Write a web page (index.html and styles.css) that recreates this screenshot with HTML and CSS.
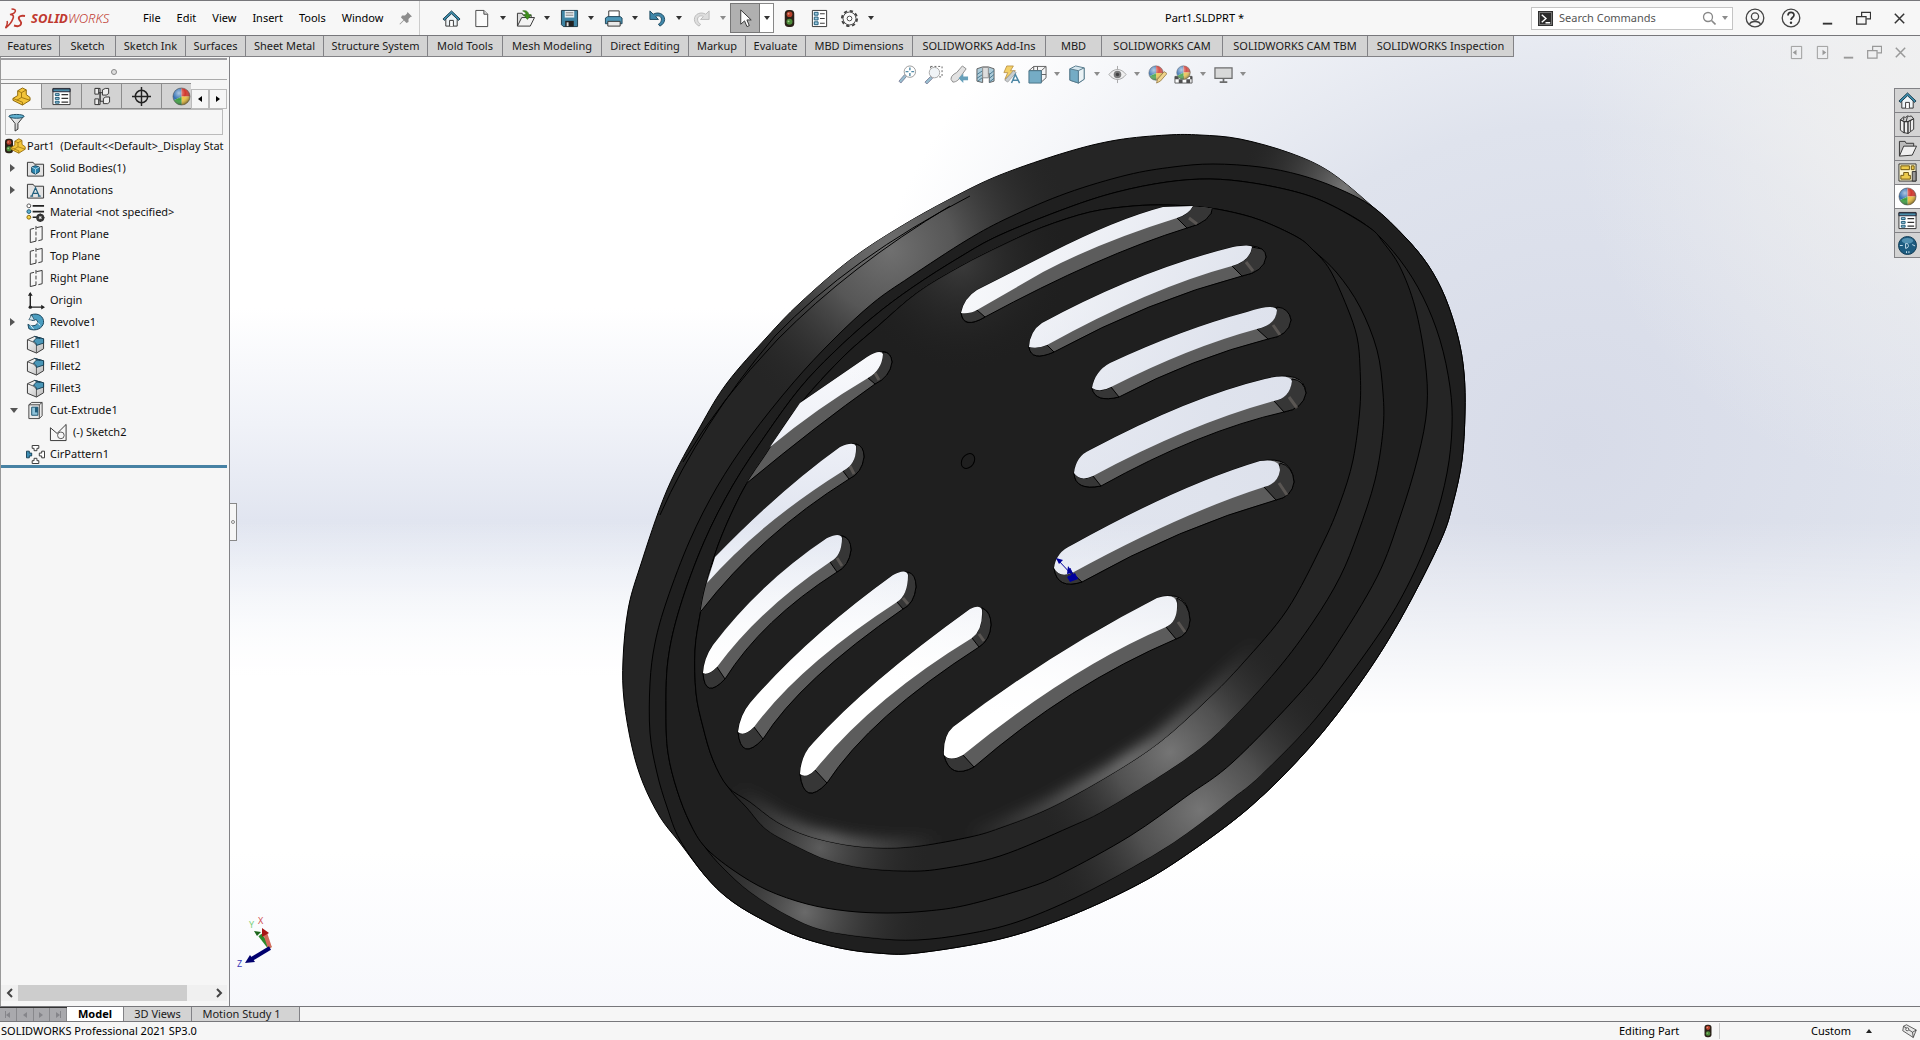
FILE: index.html
```html
<!DOCTYPE html>
<html lang="en">
<head>
<meta charset="utf-8">
<title>Part1.SLDPRT *</title>
<link rel="stylesheet" href="styles.css">
</head>
<body>
<svg class="sprite" aria-hidden="true">
  <defs>
    <linearGradient id="blueFill" x1="0" y1="0" x2="1" y2="1"><stop offset="0" stop-color="#9fd0e2"/><stop offset="1" stop-color="#2f7396"/></linearGradient>
    <linearGradient id="greyFill" x1="0" y1="0" x2="1" y2="1"><stop offset="0" stop-color="#fff"/><stop offset="1" stop-color="#b9b9b9"/></linearGradient>
    <radialGradient id="ballShade" cx=".35" cy=".3" r=".75"><stop offset="0" stop-color="#fff" stop-opacity=".6"/><stop offset=".5" stop-color="#fff" stop-opacity="0"/><stop offset="1" stop-color="#000" stop-opacity=".5"/></radialGradient>
    <symbol id="i-home" viewBox="0 0 20 20"><path d="M4 10v8h12v-8l-6-6z" fill="#eef4f7" stroke="#333"/><path d="M8 18v-6h4v6" fill="#fff" stroke="#333"/><path d="M1 10.500 10 2l9 8.500-1.500 1.500L10 5 2.500 12z" fill="#3d8fae" stroke="#1f3f50"/></symbol>
    <symbol id="i-new" viewBox="0 0 20 20"><path d="M4 1.500h8.500l4 4v13H4z" fill="#fbfbfb" stroke="#444"/><path d="M12.500 1.500v4h4" fill="#ddd" stroke="#444"/></symbol>
    <symbol id="i-open" viewBox="0 0 20 20"><path d="M1.500 18V4.500h5l1 2H16V9" fill="#ddd" stroke="#333"/><path d="M1.500 18 6 9h13.500L15 18z" fill="#f3f3f3" stroke="#333"/><path d="M7 2c4-1 6 1 6.500 4h2.500l-4 5-4-5h2.500C10.500 4 9 2.500 7 2z" fill="#3f8f1d" stroke="#24610d" stroke-width=".6"/></symbol>
    <symbol id="i-save" viewBox="0 0 20 20"><path d="M1.500 1.500h17v17h-15l-2-2z" fill="#3d83a3" stroke="#1f3948"/><path d="M5 2h10v7H5z" fill="#e7eef2"/><path d="M6 4h8M6 6.500h8" stroke="#777"/><path d="M5.500 12.500h9v6h-9z" fill="#222"/><path d="M7 14h2v4H7z" fill="#ddd"/></symbol>
    <symbol id="i-print" viewBox="0 0 20 20"><path d="M5 9V2h11v7" fill="#fff" stroke="#333"/><path d="M1.500 9.500 4 8h13l2 1.500v6h-17.500z" fill="#4e96b6" stroke="#20465a"/><path d="M4 13h13v5H4z" fill="#e9e9e9" stroke="#333"/></symbol>
    <symbol id="i-undo" viewBox="0 0 20 20"><path d="M2 2v9h9L8 8c3-2 7 0 6 4-.4 2-1.500 3-3 4l1.500 2c3-1.500 5-4 5-7C17.500 5 10.500 2.500 5.500 5.500z" fill="#3f87aa" stroke="#1f4a60"/></symbol>
    <symbol id="i-redo" viewBox="0 0 20 20"><path d="M18 2v9H9l3-3c-3-2-7 0-6 4 .4 2 1.500 3 3 4l-1.500 2c-3-1.500-5-4-5-7C2.500 5 9.500 2.500 14.500 5.500z" fill="#ddd" stroke="#bbb"/></symbol>
    <symbol id="i-cursor" viewBox="0 0 20 20"><path d="M5 1v15l4-3.500 2.500 6 2.500-1-2.500-6H16z" fill="#fff" stroke="#333"/></symbol>
    <symbol id="i-light" viewBox="0 0 20 20"><rect x="5" y="1" width="10" height="18" rx="4" fill="#2a2018"/><circle cx="10" cy="5.500" r="3" fill="#b8412c"/><circle cx="10" cy="13.500" r="3.200" fill="#4c8a3a"/><circle cx="9" cy="5" r="1" fill="#e0937d"/><circle cx="9" cy="13" r="1" fill="#a4d18c"/></symbol>
    <symbol id="i-options" viewBox="0 0 20 20"><path d="M2.500 1.500h15v17h-15z" fill="#fff" stroke="#333"/><path d="M4.500 3.500h4v3h-4zM4.500 8.500h4v3h-4zM4.500 13.500h4v3h-4z" fill="#9ccbe0" stroke="#1c5876"/><path d="M10.500 5h5M10.500 10h5M10.500 15h5" stroke="#333"/></symbol>
    <symbol id="i-gear" viewBox="0 0 20 20"><circle cx="10" cy="10" r="8" fill="none" stroke="#444" stroke-width="2" stroke-dasharray="3.500 2.780"/><circle cx="10" cy="10" r="6.800" fill="#fafafa" stroke="#444"/><circle cx="10" cy="10" r="2.500" fill="#fff" stroke="#444"/></symbol>
    <symbol id="i-pin" viewBox="0 0 14 14"><path d="m8.500 1 4.500 4.500-1.500.5-2 2 0 3-2 1L5 9.500 1 13.500.500 13 4.500 9 2 6.500l1-2 3 0 2-2z" fill="#8d8d8d"/></symbol>
    <symbol id="i-part" viewBox="0 0 20 20"><path d="M1 12 6 9V4l5-3 4 2v5l4 3v3l-8 5L1 14z" fill="#f3c53a" stroke="#8b6508"/><path d="m6 4 4 2 5-3M10 6v5l9 3M1 12l10 4v3M10 11l-5 3" fill="none" stroke="#8b6508" stroke-width=".8"/></symbol>
    <symbol id="i-props" viewBox="0 0 20 20"><path d="M1 1.500h18v17H1z" fill="#fff" stroke="#333"/><path d="M1 2h18v3H1z" fill="#4b8eaa" stroke="#223"/><path d="M3.500 7h4v2h-4zM3.500 11h4v2h-4zM3.500 15h4v2h-4z" fill="#9ccbe0" stroke="#1c5876"/><path d="M10 8h7M10 12h7M10 16h7" stroke="#333" stroke-width="1.300"/></symbol>
    <symbol id="i-config" viewBox="0 0 20 20"><path d="M3.500 1.500h5v17h-3M5 6h7M8.500 6v9H12" fill="none" stroke="#333"/><path d="M3 1.500h4v6H3zM3 12.500h4v6H3z" fill="#ececec" stroke="#333"/><path d="m11 3 3-1.500h3.500V7L15 8.500h-4zM12 12l2.500-1.500h4V16l-2 1.500H12z" fill="#ececec" stroke="#333"/></symbol>
    <symbol id="i-target" viewBox="0 0 20 20"><circle cx="10" cy="10" r="6.500" fill="none" stroke="#222" stroke-width="1.600"/><path d="M10 0v20M0 10h20" stroke="#222" stroke-width="1.500"/></symbol>
    <symbol id="i-ball" viewBox="0 0 20 20"><path d="M10 10V1a9 9 0 0 0-8 13z" fill="#3371b4"/><path d="M10 10V1a9 9 0 0 1 9 9z" fill="#d1362c"/><path d="M10 10h9a9 9 0 0 1-9 9z" fill="#f0c340"/><path d="m10 10 0 9a9 9 0 0 1-8-5z" fill="#3c9f41"/><circle cx="10" cy="10" r="9" fill="url(#ballShade)" stroke="#555" stroke-width=".6"/></symbol>
    <symbol id="i-filter" viewBox="0 0 20 20"><path d="M2.500 3.500 8.500 11v8l3-2v-6l6-7.500z" fill="url(#greyFill)" stroke="#333"/><ellipse cx="10" cy="3.500" rx="8" ry="2" fill="#5fb0cf" stroke="#1c4960"/></symbol>
    <symbol id="i-folder-body" viewBox="0 0 20 20"><path d="M1.500 18V3.500h6l1.500 2h9.500V18z" fill="#e3e3e3" stroke="#333"/><path d="m10 7 4 1.500v5L10 16l-4-2V8.500z" fill="#2b86b0" stroke="#123e55"/><path d="m6 8.500 4 2 4-2M10 10.500V16" fill="none" stroke="#bfe2f0" stroke-width=".8"/></symbol>
    <symbol id="i-folder-note" viewBox="0 0 20 20"><path d="M1.500 18V3.500h6l1.500 2h9.500V18z" fill="#e3e3e3" stroke="#333"/><path d="m6 16 4-9 4 9M7.500 13h5M4.500 16h3M12.500 16h3" fill="none" stroke="#23617f" stroke-width="1.300"/></symbol>
    <symbol id="i-material" viewBox="0 0 20 20"><path d="M7 3h12M7 9h12M7 15h5" stroke="#222" stroke-width="1.800"/><circle cx="3" cy="3" r="2" fill="#fff" stroke="#555"/><circle cx="3" cy="9" r="2" fill="#5fb0cf" stroke="#1c5876"/><circle cx="3" cy="15" r="2" fill="#f1d34a" stroke="#8b6508"/><circle cx="15" cy="15.500" r="3" fill="none" stroke="#333" stroke-width="2.500"/><path d="M15 11v9M10.500 15.500h9" stroke="#333" stroke-width="1.300"/><circle cx="15" cy="15.500" r="1.200" fill="#eee"/></symbol>
    <symbol id="i-plane" viewBox="0 0 20 20"><path d="m4.500 4.500 4-1M11 2.800l6-1.300v14l-4 1M4.500 4.500v14l6-1.500" fill="none" stroke="#333"/><path d="M10.500 1v18" stroke="#333" stroke-dasharray="4 2"/></symbol>
    <symbol id="i-origin" viewBox="0 0 20 20"><path d="M4.500 2v15H18" fill="none" stroke="#222" stroke-width="1.500"/><path d="m2 5 2.500-4L7 5zM16 14.500l4 2.500-4 2.500z" fill="#222"/><circle cx="4.500" cy="17" r="1.800" fill="#222"/></symbol>
    <symbol id="i-revolve" viewBox="0 0 20 20"><path d="M5 2c8-3 14 2 13.500 8S10 20 3 16.500L2 12c5 2.500 9 1.500 10-1.500S10 6 6.500 8z" fill="#4a9dc0" stroke="#163f55"/><path d="m6 5 9 8M4 12l4 5" stroke="#e7f4f9"/><path d="m3 7 3-5 3 6z" fill="#cfe6ef" stroke="#163f55" stroke-width=".7"/></symbol>
    <symbol id="i-fillet" viewBox="0 0 20 20"><path d="M1.500 5 9 1.500 18.500 4v10.500L11 19l-9.500-4z" fill="url(#greyFill)" stroke="#333"/><path d="M1.500 5 8 7.500l3 3V19" fill="none" stroke="#555"/><path d="M9 1.500 18.500 4v4.500L11 11c0-2-1-3.500-3-4 1-3 4-4.500 7-3.500z" fill="#4a97b8" stroke="#163f55"/></symbol>
    <symbol id="i-cut" viewBox="0 0 20 20"><path d="m3 4 3-2.500h11v14l-3 3H3z" fill="#eaeaea" stroke="#444"/><path d="M3 4h11v14.500M14 4l3-2.500" fill="none" stroke="#444"/><path d="M6 6.500h6.500v8.500H6z" fill="#8fc3da" stroke="#1b536f"/><path d="M9.500 6.500h3V12h-3z" fill="#1f5b7a"/></symbol>
    <symbol id="i-sketch" viewBox="0 0 20 20"><path d="m1.500 5 7 6 9.500-9.500v17H1.500z" fill="none" stroke="#333"/><circle cx="12.500" cy="13" r="3.500" fill="none" stroke="#555"/></symbol>
    <symbol id="i-pattern" viewBox="0 0 20 20"><path d="M6.500 .5h7v3h-2V6h-3V3.500h-2zM6.500 19.500h7v-3h-2V14h-3v2.500h-2zM19.500 6.500v7h-3v-2H14v-3h2.500v-2z" fill="#fff" stroke="#333"/><path d="M.5 6.500v7h3v-2H6v-3H3.500v-2z" fill="#3f8fb5" stroke="#163f55"/></symbol>
    <symbol id="i-zoomfit" viewBox="0 0 20 20"><path d="m1 17 6-7 2 2-6 7z" fill="#88b4c8" stroke="#557" stroke-width=".8"/><circle cx="12.500" cy="7" r="6" fill="#fff" stroke="#888"/><path d="M12.500 2.500v3M12.500 8.500v3M8 7h3M14 7h3" stroke="#36799a" stroke-width="1.500"/></symbol>
    <symbol id="i-zoomarea" viewBox="0 0 20 20"><path d="M7 1.500h12v11H7z" fill="none" stroke="#444" stroke-dasharray="2 2"/><path d="m1 18 6-6 2 2-6 6z" fill="#88b4c8" stroke="#557" stroke-width=".8"/><circle cx="11" cy="8" r="5.500" fill="#eef3f6" stroke="#999"/></symbol>
    <symbol id="i-prev" viewBox="0 0 20 20"><path d="M1 15c0-4 4-6 6-7l6-7 4 3-5 7c-2 4-5 7-9 7z" fill="#ddd" stroke="#777"/><path d="m9 14 5-5v3h5v4h-5v3z" fill="#4d90ae"/></symbol>
    <symbol id="i-section" viewBox="0 0 20 20"><path d="m1 4 6-2h6l6 2v13l-5 1.500V9H7v9.500L1 17z" fill="#9fc4d4" stroke="#444"/><path d="m1 10 6-4M1 14l6-4M2 17l5-4M14 10l5-4M14 14l5-4M14 18l5-4" stroke="#28617d"/><path d="M7 2.500h6v11H7z" fill="#d8d8d8" stroke="#777"/></symbol>
    <symbol id="i-annview" viewBox="0 0 20 20"><path d="M5 1h7L9 6h5L3 15l3-7H2z" fill="#f2c94e" stroke="#a8751b" stroke-width=".8"/><path d="m3 16 9-10 3 2-9 10z" fill="#bfc5c8" stroke="#777" stroke-width=".7"/><path d="m10 19 4-9 4.500 9M11.500 16h5" fill="none" stroke="#2f7396" stroke-width="1.600"/></symbol>
    <symbol id="i-orient" viewBox="0 0 20 20"><path d="m1 6 5-4.500h13v12L14 18V6z" fill="#f5f5f5" stroke="#444"/><path d="M6 1.500v4M14 6l5-4.500M10 1.500v4M14 10h5" fill="none" stroke="#444"/><path d="M1 6h13v13H1z" fill="#5e9fbc" stroke="#2a5a71"/></symbol>
    <symbol id="i-style" viewBox="0 0 20 20"><path d="M2 4 8 1l9 2v12l-6 4-9-3z" fill="#cfe3ec" stroke="#3a6478"/><path d="m2 4 9 2v13L2 16z" fill="#5e9fbc" stroke="#3a6478"/><path d="m11 6 6-3v12l-6 4z" fill="#e9f2f6" stroke="#3a6478"/></symbol>
    <symbol id="i-eye" viewBox="0 0 20 20"><path d="M1 10c5-7 13-7 18 0-5 7-13 7-18 0z" fill="#eee" stroke="#999"/><circle cx="10" cy="10" r="4" fill="#666"/><circle cx="10" cy="10" r="1.800" fill="#222"/><path d="M10 1v4M10 15v4" stroke="#999"/></symbol>
    <symbol id="i-scene" viewBox="0 0 20 20"><path d="M1 12h18v7H1z" fill="#fff" stroke="#444"/><path d="M1 12h4v3H1zM9 12h4v3H9zM5 15h4v4H5zM13 15h4v4h-4zM17 12h2v3h-2z" fill="#333"/></symbol>
    <symbol id="i-monitor" viewBox="0 0 20 20"><path d="M1 3h18v11H1z" fill="#d5d5d5" stroke="#555" stroke-width="1.300"/><path d="M10 14v4M6 18h8" stroke="#555" stroke-width="1.800"/></symbol>
    <symbol id="i-library" viewBox="0 0 20 20"><path d="m2.500 5 4 2v12l-4-3zM6.500 7l4 0v12.500l-4-1zM10.500 7 16.500 4v11l-6 4.500z" fill="#eee" stroke="#333"/><path d="m2.500 5 3.500-3 2 .5 2-1.500 2 .5L14 1l2.500 3-6 3-4 0zM6 2.500v3M10 1.500 8.500 7M13 5.500V17" fill="none" stroke="#333"/></symbol>
    <symbol id="i-folder" viewBox="0 0 20 20"><path d="M1.500 18V2.500h6l1 2h8V8" fill="#bbb" stroke="#333"/><path d="M1.500 18 6 7.500h13.500L15 17z" fill="#f0f0f0" stroke="#333"/></symbol>
    <symbol id="i-palette" viewBox="0 0 20 20"><path d="M1 1h18v18H1z" fill="#fdf6cf" stroke="#333"/><path d="M3 3h9v4H3zM14 3h3v4h-3zM6 10h5v3h2v4H3v-4h3z" fill="#edcb4c" stroke="#6d5410"/><path d="M15 9h4v10h-4z" fill="#999" stroke="#333"/></symbol>
    <symbol id="i-forum" viewBox="0 0 20 20"><circle cx="10" cy="10" r="9.500" fill="#1d5c80" stroke="#123c55"/><ellipse cx="10" cy="5" rx="6" ry="3" fill="#6aa6c4" opacity=".7"/><path d="M8 8c4-1 4 5 0 5zM2 10h3M15 9l3 1.500M9 16v2M11.500 16v2" fill="none" stroke="#cfe5f0"/></symbol>
    <symbol id="i-tag" viewBox="0 0 20 20"><path d="m2 3 4-2 13 7-4 10L1 9z" fill="#e7e7e7" stroke="#333"/><path d="m2 3 12 8 5-3M14 11l1 7" fill="none" stroke="#333"/><circle cx="7" cy="7" r="2" fill="#fff" stroke="#333"/></symbol>
    <symbol id="i-restore" viewBox="0 0 16 16"><path d="M6 6V1.500h9.500v7H11" fill="none" stroke="currentColor" stroke-width="1.300"/><path d="M.700 6h10v8h-10z" fill="none" stroke="currentColor" stroke-width="1.300"/></symbol>
    <symbol id="i-min" viewBox="0 0 16 16"><path d="M3 13.500h10" stroke="currentColor" stroke-width="2"/></symbol>
    <symbol id="i-close" viewBox="0 0 16 16"><path d="m3 3 10 10M13 3 3 13" stroke="currentColor" stroke-width="1.600"/></symbol>
    <symbol id="i-dock-left" viewBox="0 0 16 16"><path d="M2.500 1.500h11v13h-11z" fill="none" stroke="currentColor"/><path d="M8 5v6L4 8z" fill="currentColor"/></symbol>
    <symbol id="i-dock-right" viewBox="0 0 16 16"><path d="M2.500 1.500h11v13h-11z" fill="none" stroke="currentColor"/><path d="M8 5v6l4-3z" fill="currentColor"/></symbol>
  </defs>
</svg>

<div class="app">
  <header class="titlebar">
    <div class="brand">
      <svg class="brand-mark" viewBox="0 0 21 21"><path d="M6.500 1c3.500 0 4.500 1 3.500 3S7 6 5 6.500c3 0 4 1.500 3 4-1.500 4-4 7-7.500 9.500 2-3.500 2.500-5 1.500-7" fill="none" stroke="#c0392f" stroke-width="1.600"/><path d="M20 8c-4-.8-7 .5-6 3s3 2.500 2 5-4 2.500-7 1.500" fill="none" stroke="#c0392f" stroke-width="1.900"/></svg>
      <span class="brand-name"><b>SOLID</b>WORKS</span>
    </div>
    <nav class="menu">
      <button>File</button><button>Edit</button><button>View</button><button>Insert</button><button>Tools</button><button>Window</button>
      <button aria-label="Pin menu"><svg class="pin"><use href="#i-pin"/></svg></button>
    </nav>
    <div class="tools">
      <button class="tool" aria-label="Home"><svg><use href="#i-home"/></svg></button>
      <button class="tool" aria-label="New"><svg><use href="#i-new"/></svg></button><button class="drop" aria-label="New menu"></button>
      <button class="tool" aria-label="Open"><svg><use href="#i-open"/></svg></button><button class="drop" aria-label="Open menu"></button>
      <button class="tool" aria-label="Save"><svg><use href="#i-save"/></svg></button><button class="drop" aria-label="Save menu"></button>
      <button class="tool" aria-label="Print"><svg><use href="#i-print"/></svg></button><button class="drop" aria-label="Print menu"></button>
      <button class="tool" aria-label="Undo"><svg><use href="#i-undo"/></svg></button><button class="drop" aria-label="Undo menu"></button>
      <button class="tool" aria-label="Redo"><svg><use href="#i-redo"/></svg></button><button class="drop dim" aria-label="Redo menu"></button>
      <button class="tool pressed" aria-label="Select"><svg><use href="#i-cursor"/></svg></button><button class="drop boxed" aria-label="Select menu"></button>
      <button class="tool" aria-label="Rebuild"><svg><use href="#i-light"/></svg></button>
      <button class="tool" aria-label="File properties"><svg><use href="#i-options"/></svg></button>
      <button class="tool" aria-label="Options"><svg><use href="#i-gear"/></svg></button><button class="drop" aria-label="Options menu"></button>
    </div>
    <h1 class="doc-title">Part1.SLDPRT *</h1>
    <div class="search">
      <svg class="prompt" viewBox="0 0 16 16"><path d="M0 0h16v16H0z" fill="#2b2b2b"/><path d="M1.500 1.500h13v13h-13z" fill="none" stroke="#999" stroke-width=".8"/><path d="m4 4 4.500 4L4 12M8 12.500h5" fill="none" stroke="#fff" stroke-width="1.500"/></svg>
      <input type="text" aria-label="Search Commands" placeholder="Search Commands">
      <svg class="lens" viewBox="0 0 14 14"><circle cx="6" cy="6" r="4.500" fill="none" stroke="#888" stroke-width="1.300"/><path d="m9.500 9.500 4 4" stroke="#888" stroke-width="1.600"/></svg>
      <button class="drop dim" aria-label="Search options"></button>
    </div>
    <div class="window-buttons">
      <button aria-label="Account"><svg class="round" viewBox="0 0 20 20"><circle cx="10" cy="10" r="8.800" fill="none" stroke="#444" stroke-width="1.300"/><circle cx="10" cy="8.500" r="3.600" fill="none" stroke="#444" stroke-width="1.300"/><path d="M4.500 16.500c1-4 10-4 11 0" fill="none" stroke="#444" stroke-width="1.300"/></svg></button>
      <button aria-label="Help"><svg class="round" viewBox="0 0 20 20"><circle cx="10" cy="10" r="8.800" fill="none" stroke="#444" stroke-width="1.300"/><path d="M7 7.500c0-4 6-4 6-.5 0 2.500-3 2.500-3 5" fill="none" stroke="#333" stroke-width="1.700"/><circle cx="10" cy="14.700" r="1.200" fill="#333"/></svg></button>
      <button aria-label="Minimize"><svg><use href="#i-min"/></svg></button>
      <button aria-label="Restore"><svg><use href="#i-restore"/></svg></button>
      <button aria-label="Close"><svg><use href="#i-close"/></svg></button>
    </div>
  </header>

  <div class="workspace">
    <nav class="ribbon">
      <button>Features</button><button>Sketch</button><button>Sketch Ink</button><button>Surfaces</button><button>Sheet Metal</button><button>Structure System</button><button>Mold Tools</button><button>Mesh Modeling</button><button>Direct Editing</button><button>Markup</button><button>Evaluate</button><button>MBD Dimensions</button><button>SOLIDWORKS Add-Ins</button><button>MBD</button><button>SOLIDWORKS CAM</button><button>SOLIDWORKS CAM TBM</button><button>SOLIDWORKS Inspection</button>
    </nav>

    <div class="panes">
      <aside class="manager">
        <div class="grip"><span></span></div>
        <div class="manager-tabs">
          <button class="on" aria-label="Feature tree"><svg><use href="#i-part"/></svg></button>
          <button aria-label="Properties"><svg><use href="#i-props"/></svg></button>
          <button aria-label="Configurations"><svg><use href="#i-config"/></svg></button>
          <button aria-label="Dimensions"><svg><use href="#i-target"/></svg></button>
          <button class="last" aria-label="Display"><svg><use href="#i-ball"/></svg></button>
          <button class="step" aria-label="Previous tab"><i class="left"></i></button>
          <button class="step" aria-label="Next tab"><i class="right"></i></button>
        </div>
        <button class="filter" aria-label="Filter"><svg><use href="#i-filter"/></svg></button>
        <ul class="tree">
          <li class="root"><svg class="mini-light"><use href="#i-light"/></svg><svg class="mini-part"><use href="#i-part"/></svg><span>Part1&nbsp; (Default&lt;&lt;Default&gt;_Display Stat</span></li>
          <li><i class="closed"></i><svg><use href="#i-folder-body"/></svg><span>Solid Bodies(1)</span></li>
          <li><i class="closed"></i><svg><use href="#i-folder-note"/></svg><span>Annotations</span></li>
          <li><i></i><svg><use href="#i-material"/></svg><span>Material &lt;not specified&gt;</span></li>
          <li><i></i><svg><use href="#i-plane"/></svg><span>Front Plane</span></li>
          <li><i></i><svg><use href="#i-plane"/></svg><span>Top Plane</span></li>
          <li><i></i><svg><use href="#i-plane"/></svg><span>Right Plane</span></li>
          <li><i></i><svg><use href="#i-origin"/></svg><span>Origin</span></li>
          <li><i class="closed"></i><svg><use href="#i-revolve"/></svg><span>Revolve1</span></li>
          <li><i></i><svg><use href="#i-fillet"/></svg><span>Fillet1</span></li>
          <li><i></i><svg><use href="#i-fillet"/></svg><span>Fillet2</span></li>
          <li><i></i><svg><use href="#i-fillet"/></svg><span>Fillet3</span></li>
          <li><i class="opened"></i><svg><use href="#i-cut"/></svg><span>Cut-Extrude1</span></li>
          <li class="child"><i></i><svg><use href="#i-sketch"/></svg><span>(-) Sketch2</span></li>
          <li><i></i><svg><use href="#i-pattern"/></svg><span>CirPattern1</span></li>
        </ul>
        <div class="hscroll">
          <button aria-label="Scroll left"><svg viewBox="0 0 10 10"><path d="M7 1 3 5l4 4" fill="none" stroke="#444" stroke-width="2"/></svg></button>
          <div class="track"><span></span></div>
          <button aria-label="Scroll right"><svg viewBox="0 0 10 10"><path d="m3 1 4 4-4 4" fill="none" stroke="#444" stroke-width="2"/></svg></button>
        </div>
      </aside>

      <main class="viewport">
        <svg class="model" viewBox="230 57 1690 949" role="img" aria-label="Wheel part">
          <defs>
            <radialGradient id="hiOuter" gradientUnits="userSpaceOnUse" cx="890" cy="250" r="185"><stop offset="0" stop-color="#707070"/><stop offset=".35" stop-color="#5c5c5c" stop-opacity=".9"/><stop offset="1" stop-color="#262626" stop-opacity="0"/></radialGradient>
            <radialGradient id="hiCorner" gradientUnits="userSpaceOnUse" cx="1345" cy="188" r="105"><stop offset="0" stop-color="#777"/><stop offset="1" stop-color="#262626" stop-opacity="0"/></radialGradient>
            <radialGradient id="hiRim" gradientUnits="userSpaceOnUse" cx="1200" cy="810" r="165"><stop offset="0" stop-color="#757575"/><stop offset=".4" stop-color="#555" stop-opacity=".9"/><stop offset="1" stop-color="#262626" stop-opacity="0"/></radialGradient>
            <radialGradient id="hiRimLow" gradientUnits="userSpaceOnUse" cx="805" cy="912" r="125"><stop offset="0" stop-color="#6a6a6a"/><stop offset="1" stop-color="#262626" stop-opacity="0"/></radialGradient>
            <radialGradient id="hiWell" gradientUnits="userSpaceOnUse" cx="1170" cy="752" r="145"><stop offset="0" stop-color="#757575"/><stop offset=".4" stop-color="#555" stop-opacity=".9"/><stop offset="1" stop-color="#262626" stop-opacity="0"/></radialGradient>
            <radialGradient id="hiWellLow" gradientUnits="userSpaceOnUse" cx="820" cy="848" r="110"><stop offset="0" stop-color="#5c5c5c"/><stop offset="1" stop-color="#262626" stop-opacity="0"/></radialGradient>
            <radialGradient id="hiFloor" gradientUnits="userSpaceOnUse" cx="1130" cy="765" r="180"><stop offset="0" stop-color="#777"/><stop offset="1" stop-color="#777" stop-opacity="0"/></radialGradient>
            <radialGradient id="hiFloorLow" gradientUnits="userSpaceOnUse" cx="830" cy="843" r="110"><stop offset="0" stop-color="#6a6a6a"/><stop offset="1" stop-color="#666" stop-opacity="0"/></radialGradient>
            <radialGradient id="hiFloorTop" gradientUnits="userSpaceOnUse" cx="960" cy="262" r="110"><stop offset="0" stop-color="#3c3c3c"/><stop offset="1" stop-color="#1f1f1f" stop-opacity="0"/></radialGradient>
            <filter id="soft" x="-10%" y="-50%" width="120%" height="200%"><feGaussianBlur stdDeviation="7"/></filter>

            <path id="body" data-points="1000,175 1067,152 1117,140 1167,135 1200,135 1240,139 1290,153 1330,172 1373,207 1405,237 1428,265 1445,297 1458,337 1464,373 1465,413 1462,460 1453,503 1440,542 1400,620 1360,683 1310,747 1250,807 1183,857 1133,887 1067,917 1000,939 917,953 877,953 840,948 800,937 767,922 733,902 707,878 680,843 660,817 643,783 632,747 624,700 623,660 628,610 640,567 667,490 700,427 727,383 767,337 800,303 850,260 900,227 950,199"/>
            <path id="face" data-points="680,840 667,807 657,773 650,733 650,683 655,643 667,600 690,540 717,487 750,437 793,383 833,340 873,303 910,277 967,240 1010,217 1067,193 1127,175 1173,167 1213,164 1260,167 1300,175 1337,188 1373,207 1405,237 1428,265 1445,297 1458,337 1464,373 1465,413 1462,460 1453,503 1440,542 1400,620 1360,683 1310,747 1250,807 1183,857 1133,887 1067,917 1000,939 917,953 877,953 840,948 800,937 767,922 733,902 707,878"/>
            <path id="rim" data-points="705,847 690,823 677,790 668,753 666,713 668,660 680,607 704,542 733,485 767,433 800,388 833,353 873,317 913,287 960,257 1000,235 1067,208 1117,192 1167,182 1210,179 1253,183 1300,193 1333,206 1370,228 1400,260 1423,297 1440,340 1450,387 1452,427 1447,473 1433,526 1410,581 1377,637 1317,717 1263,773 1233,798 1180,838 1133,867 1075,898 1017,922 967,934 917,940 873,938 823,930 787,915 750,892 723,868"/>
            <path id="ledge" data-points="705,847 690,823 677,790 668,753 666,713 668,660 680,607 704,542 733,485 767,433 800,388 833,353 873,317 913,287 960,257 1000,235 1067,208 1117,192 1167,182 1210,179 1253,183 1300,193 1333,206 1370,228 1383,242 1400,267 1415,307 1425,360 1427,407 1418,457 1400,517 1377,577 1333,650 1300,693 1233,762 1187,796 1130,836 1063,873 1027,888 967,905 927,911 887,913 847,911 807,904 767,890 733,870"/>
            <path id="well" data-points="728,787 713,760 703,727 696,693 695,650 700,615 706,585 720,540 743,490 767,453 797,408 840,360 877,327 917,293 960,267 1003,245 1043,227 1090,212 1133,206 1167,205 1200,207 1227,211 1260,220 1297,237 1313,250 1337,273 1360,307 1377,350 1383,393 1383,430 1375,480 1358,533 1340,577 1313,622 1277,670 1227,724 1187,758 1110,807 1070,827 1000,856 940,869 903,871 863,868 828,860 800,848 767,830 747,808"/>
            <path id="floor" data-points="728,787 713,760 703,727 696,693 695,650 700,615 706,585 720,540 743,490 767,453 797,408 840,360 877,327 917,293 960,267 1003,245 1043,227 1090,212 1133,206 1167,205 1200,207 1227,211 1260,220 1297,237 1313,250 1330,270 1347,307 1357,337 1360,367 1360,407 1353,460 1340,503 1322,545 1287,610 1243,663 1207,700 1160,742 1110,775 1050,808 1000,828 970,837 920,846 883,848 847,845 808,836 777,822 750,802"/>
            <clipPath id="floorClip"><use href="#floor"/></clipPath>

            <g id="voids">
              <path d="M961 313Q964 298 977 290L1050 253Q1117 219 1163 207L1193 206Q1189 214 1177 218Q1100 242 1043 272L977 310Q970 314 961 313z"/>
              <path d="M1029 347Q1030 331 1042 323Q1140 270 1233 247Q1250 244 1252 247Q1250 261 1232 266Q1150 288 1047 345Q1038 349 1029 347z"/>
              <path d="M1092 388Q1095 371 1110 363Q1183 329 1247 312Q1274 303 1277 310Q1276 325 1257 329Q1190 347 1111 387Q1100 393 1092 388z"/>
              <path d="M1074 473Q1076 456 1090 450Q1190 397 1265 379Q1289 373 1292 381Q1290 398 1274 401Q1190 424 1093 476Q1080 482 1074 473z"/>
              <path d="M1054 568Q1056 552 1072 545Q1180 485 1260 461Q1280 458 1280 470Q1278 484 1264 487Q1180 514 1072 573Q1059 578 1054 568z"/>
              <path d="M944 755Q943 736 953 727Q1050 653 1157 598Q1175 592 1177 603Q1178 622 1166 627Q1070 668 963 755Q950 762 944 755z"/>
              <path d="M800 774Q801 755 813 743Q867 683 970 609Q980 604 982 610Q983 630 972 638Q872 699 815 770Q806 779 800 774z"/>
              <path d="M738 732Q740 715 750 703Q807 637 893 575Q906 568 908 575Q908 595 897 602Q800 665 754 727Q744 737 738 732z"/>
              <path d="M703 673Q704 658 713 645Q760 583 827 538Q840 532 842 538Q842 556 830 562Q760 609 717 667Q708 676 703 673z"/>
              <path d="M707 583 715 557Q780 490 840 447Q853 441 856 446Q857 464 843 471Q760 523 707 583z"/>
              <path d="M770 447 800 403 867 357Q880 349 883 354Q882 370 868 378Q817 408 770 447z"/>
            </g>
            <mask id="cutouts" maskUnits="userSpaceOnUse" x="600" y="100" width="900" height="880"><rect x="600" y="100" width="900" height="880" fill="#fff"/><use href="#voids" fill="#000"/></mask>
          </defs>

          <g mask="url(#cutouts)" stroke-linejoin="round">
            <use href="#body" class="wall"/>
            <use href="#body" fill="url(#hiOuter)"/>
            <use href="#body" fill="url(#hiCorner)"/>
            <path class="edge" d="M660 515Q700 425 775 336Q850 258 970 196"/>
            <path class="edge" d="M683 462Q720 400 778 339Q850 266 950 206"/>
            <use href="#face" class="flat"/>
            <use href="#rim" class="wall"/>
            <use href="#rim" fill="url(#hiRim)"/>
            <use href="#rim" fill="url(#hiRimLow)"/>
            <use href="#ledge" class="flat"/>
            <use href="#well" class="wall"/>
            <use href="#well" fill="url(#hiWell)"/>
            <use href="#well" fill="url(#hiWellLow)"/>
            <use href="#floor" class="flat"/>
            <use href="#floor" fill="url(#hiFloorTop)"/>
            <g clip-path="url(#floorClip)">
              <g fill="none" stroke-width="18" filter="url(#soft)">
                <path stroke="url(#hiFloor)" d="M1340 503 1322 545 1287 613 1243 663 1207 700 1160 742 1110 775 1050 808 1000 829 970 837"/>
                <path stroke="url(#hiFloorLow)" d="M970 837 920 846 883 848 847 845 808 836 777 822 750 802 728 787"/>
              </g>
              <g class="slot">
                <path d="M961 313Q964 298 977 290L1050 253Q1117 219 1163 207L1213 206Q1212 222 1187 228Q1100 255 985 317Q963 330 961 313z"/>
                <path d="M1029 347Q1030 331 1042 323Q1140 270 1233 247Q1265 242 1266 257Q1264 272 1242 276Q1150 300 1054 352Q1031 362 1029 347z"/>
                <path d="M1092 388Q1095 371 1110 363Q1183 329 1247 312Q1288 300 1291 320Q1289 336 1268 339Q1193 358 1119 397Q1095 403 1092 388z"/>
                <path d="M1074 473Q1076 456 1090 450Q1190 397 1265 379Q1304 369 1306 393Q1303 409 1284 412Q1200 431 1101 486Q1075 491 1074 473z"/>
                <path d="M1054 568Q1056 552 1072 545Q1180 485 1260 461Q1292 455 1294 482Q1292 497 1276 500Q1180 527 1082 582Q1057 590 1054 568z"/>
                <path d="M944 755Q943 736 953 727Q1050 653 1157 598Q1188 588 1190 620Q1189 635 1176 639Q1070 684 974 767Q950 780 944 755z"/>
                <path d="M800 774Q801 755 813 743Q867 683 970 609Q990 602 991 625Q990 640 979 647Q870 717 827 783Q804 807 800 774z"/>
                <path d="M738 732Q740 715 750 703Q807 637 893 575Q915 565 916 587Q914 604 903 609Q800 680 763 739Q741 762 738 732z"/>
                <path d="M703 673Q704 658 713 645Q760 583 827 538Q850 529 851 550Q849 566 837 572Q762 620 725 679Q705 700 703 673z"/>
                <path d="M690 622 715 557Q780 490 840 447Q863 437 864 457Q862 473 849 479Q760 535 702 610z"/>
                <path d="M735 492 800 403 867 357Q890 344 892 362Q890 377 875 384Q817 425 747 483z"/>
              </g>
              <g class="slot-end">
                <path d="M1177 218Q1190 214 1194 204L1213 206Q1212 222 1187 228zM961 312Q970 314 977 310L985 317Q963 330 961 312z"/>
                <path d="M1232 266Q1250 261 1252 247L1262 249Q1266 252 1266 257Q1264 272 1242 276zM1029 347Q1038 349 1047 345L1054 352Q1031 362 1029 347z"/>
                <path d="M1257 329Q1276 325 1277 307Q1289 308 1291 320Q1289 336 1268 339zM1092 388Q1100 393 1111 387L1119 397Q1095 403 1092 388z"/>
                <path d="M1274 401Q1290 398 1292 379Q1304 380 1306 393Q1303 409 1284 412zM1074 473Q1080 482 1093 476L1101 486Q1075 491 1074 473z"/>
                <path d="M1264 487Q1278 484 1280 463Q1293 466 1294 482Q1292 497 1276 500zM1054 568Q1059 578 1072 573L1082 582Q1057 590 1054 568z"/>
                <path d="M1166 627Q1178 622 1177 598Q1189 603 1190 620Q1189 635 1176 639zM944 755Q950 762 963 755L974 767Q950 780 944 755z"/>
                <path d="M972 638Q983 630 982 608Q991 612 991 625Q990 640 979 647zM800 774Q806 779 815 770L827 783Q804 807 800 774z"/>
                <path d="M897 602Q908 595 908 572Q916 574 916 587Q914 604 903 609zM738 732Q744 737 754 727L763 739Q741 762 738 732z"/>
                <path d="M830 562Q842 556 842 536Q851 538 851 550Q849 566 837 572zM703 673Q708 676 717 667L725 679Q705 700 703 673z"/>
                <path d="M843 471Q857 464 856 444Q864 446 864 457Q862 473 849 479z"/>
                <path d="M868 378Q882 370 883 352Q891 352 892 362Q890 377 875 384z"/>
              </g>
              <path class="glint" d="m1189 218 8 6M1246 262l7 9M1273 325l7 10M1289 397l8 11M1279 483l8 12M1178 622l7 10M979 634l5 7M903 598l5 6M837 558l5 8M850 466l4 8M875 373l4 7"/>
            </g>
            <ellipse class="edge" cx="968" cy="461" rx="6" ry="8" transform="rotate(35 968 461)"/>
          </g>
          <g class="marker" stroke="#00009c" fill="#00009c"><path d="m1058 560 16 17M1070 568l5 12M1068 576l10 2"/><path d="m1056 558 7 2-4 4zM1068 566l5 7-6 1zM1067 577l8-4 3 6-8 3z" stroke="none"/></g>
          <g class="triad">
            <path d="m270 948-10-13" stroke="#2c8a2c" stroke-width="4"/><path d="m254 931 7 1-4 4z" fill="#1c661c"/>
            <path d="m270 948-5-15" stroke="#d46a5a" stroke-width="4"/><path d="m262 928 7 5-7 4z" fill="#a81616"/>
            <path d="m270 948-20 12" stroke="#00006e" stroke-width="4"/><path d="m245 963 5-8 5 7z" fill="#00006e"/>
            <text x="237" y="967" fill="#3a3ab8">Z</text><text x="249" y="928" fill="#7fd07f">Y</text><text x="258" y="924" fill="#d05050">X</text>
          </g>
        </svg>

        <div class="headsup">
          <button aria-label="Zoom to fit"><svg><use href="#i-zoomfit"/></svg></button>
          <button aria-label="Zoom to area"><svg><use href="#i-zoomarea"/></svg></button>
          <button aria-label="Previous view"><svg><use href="#i-prev"/></svg></button>
          <button aria-label="Section view"><svg><use href="#i-section"/></svg></button>
          <button aria-label="Annotation views"><svg><use href="#i-annview"/></svg></button>
          <button aria-label="View orientation"><svg><use href="#i-orient"/></svg></button><button class="drop dim" aria-label="Orientation menu"></button>
          <button aria-label="Display style"><svg><use href="#i-style"/></svg></button><button class="drop dim" aria-label="Style menu"></button>
          <button aria-label="Hide or show items"><svg><use href="#i-eye"/></svg></button><button class="drop dim" aria-label="Visibility menu"></button>
          <button aria-label="Edit appearance"><svg viewBox="0 0 20 20"><use href="#i-ball" width="17" height="17"/><path d="m9 19 1-4 7-8 3 2-7 8z" fill="#f0cf7a" stroke="#7b5a1c" stroke-width=".8"/></svg></button>
          <button aria-label="Apply scene"><svg viewBox="0 0 20 20"><use href="#i-scene" width="20" height="20"/><use href="#i-ball" x="2" y="0" width="16" height="16"/></svg></button><button class="drop dim" aria-label="Scene menu"></button>
          <button aria-label="View settings"><svg><use href="#i-monitor"/></svg></button><button class="drop dim" aria-label="View settings menu"></button>
        </div>
        <div class="doc-buttons">
          <button aria-label="Collapse left"><svg><use href="#i-dock-left"/></svg></button>
          <button aria-label="Collapse right"><svg><use href="#i-dock-right"/></svg></button>
          <button aria-label="Minimize document"><svg><use href="#i-min"/></svg></button>
          <button aria-label="Restore document"><svg><use href="#i-restore"/></svg></button>
          <button aria-label="Close document"><svg><use href="#i-close"/></svg></button>
        </div>
        <div class="taskpane">
          <button aria-label="Resources"><svg><use href="#i-home"/></svg></button>
          <button aria-label="Design library"><svg><use href="#i-library"/></svg></button>
          <button aria-label="File explorer"><svg><use href="#i-folder"/></svg></button>
          <button aria-label="View palette"><svg><use href="#i-palette"/></svg></button>
          <button class="on" aria-label="Appearances"><svg><use href="#i-ball"/></svg></button>
          <button aria-label="Custom properties"><svg><use href="#i-props"/></svg></button>
          <button aria-label="Forum"><svg><use href="#i-forum"/></svg></button>
        </div>
        <button class="splitter" aria-label="Collapse panel"><span></span></button>
      </main>
    </div>
  </div>

  <nav class="sheets">
    <div class="sheet-nav">
      <button aria-label="First"><i class="bar"></i><i class="left"></i></button><button aria-label="Back"><i class="left"></i></button><button aria-label="Forward"><i class="right"></i></button><button aria-label="Last"><i class="right"></i><i class="bar"></i></button>
    </div>
    <button class="sheet on">Model</button><button class="sheet views">3D Views</button><button class="sheet motion">Motion Study 1</button>
  </nav>
  <footer class="status">
    <span class="product">SOLIDWORKS Professional 2021 SP3.0</span>
    <span class="mode">Editing Part</span>
    <svg class="status-light"><use href="#i-light"/></svg>
    <button class="units">Custom <i class="up"></i></button>
    <svg class="status-tag"><use href="#i-tag"/></svg>
  </footer>
</div>
<script src="model.js"></script>
</body>
</html>
```
FILE: model.js
```js
// Turns each outline's list of vertices into a closed smooth curve.
document.querySelectorAll('[data-points]').forEach(function (path) {
  var pts = path.dataset.points.split(' ').map(function (pair) { return pair.split(',').map(Number); });
  var n = pts.length;
  var d = 'M' + pts[0].join(' ');
  for (var i = 0; i < n; i++) {
    var a = pts[(i + n - 1) % n], b = pts[i], c = pts[(i + 1) % n], e = pts[(i + 2) % n];
    d += 'C' + [
      b[0] + (c[0] - a[0]) / 6, b[1] + (c[1] - a[1]) / 6,
      c[0] - (e[0] - b[0]) / 6, c[1] - (e[1] - b[1]) / 6,
      c[0], c[1]
    ].join(' ');
  }
  path.setAttribute('d', d + 'z');
});
```
FILE: styles.css
```css
* { box-sizing: border-box; }
body { margin: 0; font: 11px/16px "Noto Sans", "Open Sans", sans-serif; color: #1a1a1a; background: #f6f6f6; }
button, input { font: inherit; color: inherit; }
button { border: 0; background: none; padding: 0; margin: 0; display: flex; align-items: center; justify-content: center; white-space: nowrap; }
svg { flex: none; display: block; }
i { display: block; flex: none; }
.sprite { position: absolute; width: 0; height: 0; }
.app { display: flex; flex-direction: column; height: 100vh; overflow: hidden; }

/* title bar */
.titlebar { display: flex; align-items: center; height: 36px; flex: none; background: #f7f7f7; border-top: 1px solid #77777b; border-bottom: 1px solid #77777b; }
.brand { display: flex; align-items: center; gap: 5px; width: 143px; padding-left: 5px; color: #c0392f; }
.brand-mark { width: 21px; height: 21px; }
.brand-name { font-size: 13px; font-style: italic; font-weight: 300; }
.brand-name b { font-weight: 700; }
.menu { display: flex; align-items: center; gap: 16px; width: 277px; height: 34px; color: #000; border-right: 1px solid #ccc; }
.pin { width: 14px; height: 14px; }
.tools { display: flex; height: 30px; padding-left: 16px; }
.tool { width: 30px; }
.tool svg { width: 19px; height: 19px; }
.tool.pressed { background: #b0b0b0; border: 1px solid #777; }
.drop { width: 14px; }
.drop::after { content: ""; border: 3px solid transparent; border-top: 4px solid #333; border-bottom: 0; }
.drop.dim::after { border-top-color: #8c8c8c; }
.drop.boxed { background: #fff; border: 1px solid #888; border-left: 0; }
.doc-title { flex: 1; margin: 0; font-size: 11px; font-weight: 400; text-align: center; color: #000; }
.search { display: flex; align-items: center; width: 202px; height: 23px; padding: 0 0 0 6px; background: #fff; border: 1px solid #c4c4c4; }
.prompt { width: 15px; height: 15px; }
.search input { flex: 1; min-width: 0; border: 0; outline: 0; padding: 0 6px; background: none; }
.search input::placeholder { color: #555; opacity: 1; }
.lens { width: 14px; height: 14px; margin-right: 2px; }
.window-buttons { display: flex; padding-left: 4px; margin-right: 3px; color: #333; }
.window-buttons button { width: 36px; height: 30px; }
.window-buttons svg { width: 15px; height: 15px; }
.window-buttons .round { width: 20px; height: 20px; }

/* workspace backdrop */
.workspace { flex: 1; min-height: 0; display: flex; flex-direction: column;
  background:
    linear-gradient(to bottom, rgba(255,255,255,0) 50%, rgba(255,255,255,.6) 62%, #fff 70%, #fff 84%, #f7f8fc 100%),
    radial-gradient(ellipse 18% 38% at 100% 8%, #efefef, rgba(239,239,239,0)),
    radial-gradient(ellipse 38% 66% at 82% 42%, #d7dbe8 0%, #dfe3ed 50%, rgba(235,238,245,0) 100%),
    linear-gradient(to bottom, #fff 28%, #f0f2f8 40%, #e1e5f0 50%, #e6eaf3 54%, #fff 66%); }
.ribbon { display: grid; flex: none; height: 21px; grid-template-columns: 60px 56px 70px 60px 78px 104px 75px 99px 87px 57px 60px 107px 133px 56px 121px 145px 146px; justify-content: start; }
.ribbon button { background: #d3d3d3; border-right: 1px solid #828286; border-bottom: 1px solid #828286; }
.panes { flex: 1; min-height: 0; display: flex; }

/* manager panel */
.manager { width: 230px; flex: none; display: flex; flex-direction: column; background: #f6f6f6; border-right: 1px solid #828286; border-left: 1px solid #999; padding-right: 2px; }
.grip { height: 22px; flex: none; border-bottom: 1px solid #aaa; display: flex; align-items: center; justify-content: center; border-top: 2px solid #9c9ca0; margin-top: 1px; }
.grip span { width: 6px; height: 6px; border-radius: 50%; border: 1px solid #888; background: #ddd; margin-top: 4px; }
.manager-tabs { display: flex; flex: none; height: 26px; margin-top: 3px; }
.manager-tabs button { width: 40px; background: #d3d3d3; border: 1px solid #8c8c8c; border-left: 0; }
.manager-tabs svg { width: 19px; height: 19px; }
.manager-tabs .on { width: 41px; background: #f6f6f6; border-bottom-color: #f6f6f6; }
.manager-tabs .last { width: 29px; border-right: 0; justify-content: flex-end; }
.manager-tabs .step { width: 18px; height: 20px; align-self: flex-end; background: #f6f6f6; border: 1px solid #bbb; }
.left { border: 3px solid transparent; border-right: 4px solid #000; border-left: 0; }
.right { border: 3px solid transparent; border-left: 4px solid #000; border-right: 0; }
.filter { height: 26px; flex: none; justify-content: flex-start; margin: 0 4px; padding-left: 1px; border: 1px solid #bbb; }
.filter svg { width: 19px; height: 19px; }
.tree { list-style: none; flex: 1; min-height: 0; margin: 0; padding: 0; color: #111; overflow: hidden; }
.tree li { display: flex; align-items: center; height: 22px; padding-left: 9px; white-space: nowrap; overflow: hidden; }
.tree li:last-child { box-shadow: 0 3px 0 #4782a4; }
.tree li svg { width: 19px; height: 19px; margin-right: 5px; }
.tree i { width: 16px; }
.tree .closed::before { content: ""; display: block; width: 0; border: 4px solid transparent; border-left: 5px solid #555; border-right: 0; }
.tree .opened::before { content: ""; display: block; width: 0; border: 4px solid transparent; border-top: 5px solid #555; border-bottom: 0; }
.tree .child { padding-left: 32px; }
.tree .root { padding-left: 0; }
.tree .root .mini-light { width: 16px; height: 16px; margin: 0 -7px 0 0; }
.tree .root .mini-part { width: 16px; height: 16px; margin-right: 1px; }
.hscroll { display: flex; flex: none; height: 16px; margin-bottom: 5px; background: #f0f0f0; }
.hscroll button { width: 17px; }
.hscroll svg { width: 10px; height: 10px; }
.track { flex: 1; }
.track span { display: block; width: 88%; height: 16px; background: #cdcdcd; }

/* graphics area */
.viewport { flex: 1; min-width: 0; position: relative; }
.model { width: 100%; height: 100%; }
.wall { fill: #252525; stroke: #000; stroke-width: 1; }
.flat { fill: #1f1f1f; stroke: #000; stroke-width: 1; }
.edge { fill: none; stroke: #000; }
.slot { fill: #5c5c5c; stroke: #000; stroke-width: 1; }
.slot-end { fill: #363636; stroke: #000; stroke-width: 1; }
.glint { fill: none; stroke: #6a6460; stroke-width: 3; opacity: .7; }
.triad { font-size: 9px; fill: none; }
.headsup { position: absolute; top: 5px; left: 50%; width: 360px; margin-left: -181px; display: flex; height: 24px; }
.headsup button { width: 26px; }
.headsup .drop { width: 14px; }
.headsup svg { width: 19px; height: 19px; opacity: .85; }
.doc-buttons { position: absolute; right: 7px; top: -15px; display: flex; color: #999; }
.doc-buttons button { width: 26px; height: 20px; }
.doc-buttons svg { width: 15px; height: 15px; }
.taskpane { position: absolute; right: 0; top: 31px; width: 26px; border: 1px solid #828286; border-right: 0; }
.taskpane button { width: 25px; height: 24px; background: #d3d3d3; border-bottom: 1px solid #828286; }
.taskpane button:last-child { border-bottom: 0; }
.taskpane .on { background: #fff; }
.taskpane svg { width: 19px; height: 19px; }
.splitter { position: absolute; left: 0; top: 47%; width: 7px; height: 38px; background: #f6f6f6; border: 1px solid #888; border-left: 0; }
.splitter span { width: 4px; height: 4px; border: 1px solid #888; border-radius: 50%; }

/* bottom strips */
.sheets { display: flex; flex: none; height: 16px; border-top: 1px solid #77777b; border-bottom: 1px solid #77777b; }
.sheet-nav { display: flex; width: 67px; background: #a9a9ad; color: #888; border-top: 1px solid #333; }
.sheet-nav button { flex: 1; border-right: 1px solid #88888c; }
.sheet-nav .left { border-right-color: #85858a; }
.sheet-nav .right { border-left-color: #85858a; }
.bar { width: 1px; height: 7px; background: #85858a; }
.sheet { background: #d3d3d3; border-right: 1px solid #828286; width: 68px; line-height: 14px; }
.sheet.on { width: 57px; background: #fff; font-weight: 700; color: #000; }
.sheet.motion { width: 108px; padding-right: 8px; }
.status { display: flex; align-items: center; flex: none; height: 18px; padding: 0 2px 0 1px; background: #f6f6f6; color: #000; }
.product { flex: 1; }
.mode { width: 82px; }
.status-light { width: 14px; height: 14px; margin-right: 4px; }
.units { width: 182px; gap: 15px; padding-left: 91px; justify-content: flex-start; border-left: 1px solid #ccc; }
.up { border: 3px solid transparent; border-bottom: 4px solid #222; border-top: 0; }
.status-tag { width: 17px; height: 15px; }
```
